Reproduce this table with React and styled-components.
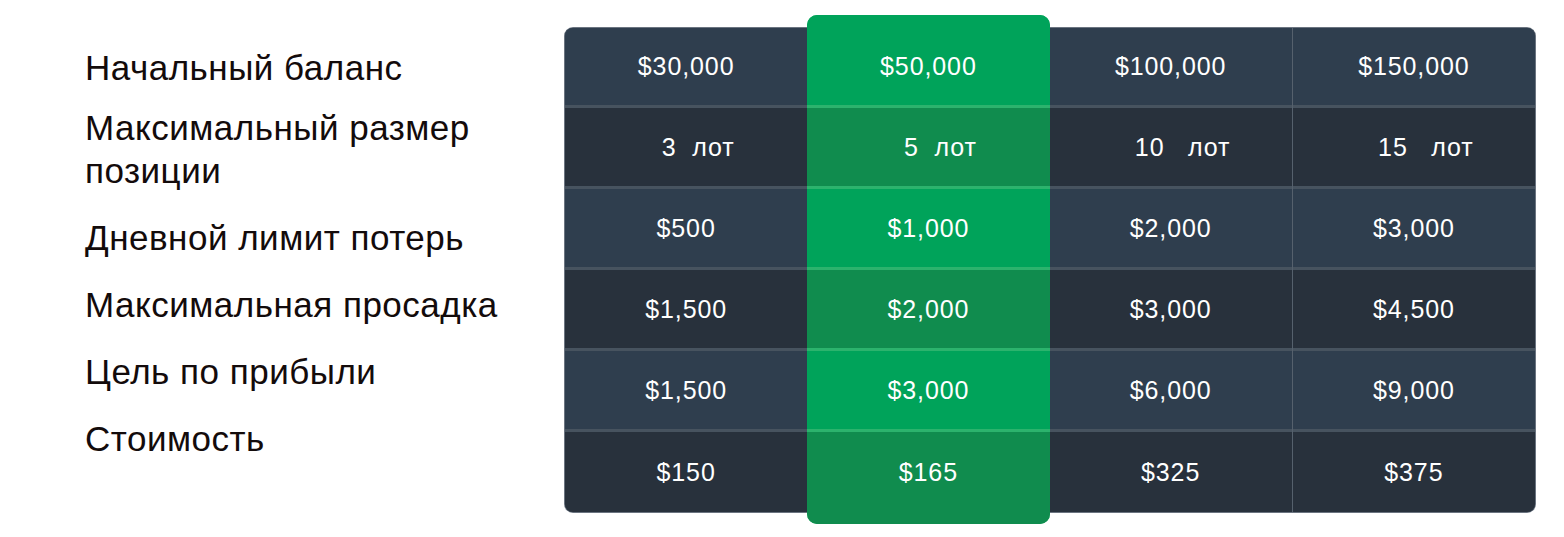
import React from "react";
import styled, { createGlobalStyle } from "styled-components";

const GlobalStyle = createGlobalStyle`
    body {
        margin: 0;
        background: #ffffff;
        font-family: "Liberation Sans", Arial, sans-serif;
    }
`

const StyledPage = styled.div`
    display: flex;
    align-items: flex-start;
    width: 1564px;
    height: 537px;
    box-sizing: border-box;
    padding: 28px 0 0 0;
`

const StyledLabels = styled.div`
    display: flex;
    flex-direction: column;
    gap: 24px;
    width: 480px;
    box-sizing: border-box;
    padding: 18px 0 0 85px;
`

const StyledLabel = styled.div`
    font-size: 35px;
    line-height: 43px;
    letter-spacing: 0.5px;
    color: #130b0b;
    width: 450px;
    margin-bottom: ${props => props.$tight ? '-7px' : '0'};
`

const StyledTable = styled.div`
    display: flex;
    width: 970px;
    margin-left: 85px;
    border-radius: 8px;
    background-color: #2f3e4e;
    box-shadow: 0 0 0 1px #6b7480;
`

const StyledColumn = styled.div`
    flex: 1;
    display: flex;
    flex-direction: column;
    gap: 3px;
    position: relative;
    background-color: ${props => props.$featured ? '#2cb36d' : '#47535f'};
    border-left: ${props => props.$divided ? '1px solid #56616d' : 'none'};
    border-radius: ${props => props.$featured ? '10px' : '0'};
    margin: ${props => props.$featured ? '-13px 0 -12px' : '0'};
    overflow: hidden;
    z-index: ${props => props.$featured ? 2 : 1};

    &:first-child {
        border-radius: 8px 0 0 8px;
    }
    &:last-child {
        border-radius: 0 8px 8px 0;
    }
`

const rowColor = (featured, even) => {
    if (featured) return even ? '#108c4e' : '#00a35a';
    return even ? '#28313c' : '#2f3e4e';
}

const StyledCell = styled.div`
    height: 78px;
    display: flex;
    align-items: center;
    justify-content: center;
    box-sizing: border-box;
    padding-left: ${props => props.$shift ? '24px' : '0'};
    background-color: ${props => rowColor(props.$featured, props.$even)};
    color: #ffffff;
    font-size: 25px;
    letter-spacing: 0.9px;
    white-space: pre;

    &:first-child {
        height: ${props => props.$featured ? '90px' : '77px'};
        padding-top: ${props => props.$featured ? '12px' : '0'};
    }
    &:last-child {
        height: ${props => props.$featured ? '92px' : '80px'};
        padding-bottom: ${props => props.$featured ? '12px' : '0'};
    }
`

const labels = [
    "Начальный баланс",
    "Максимальный размер позиции",
    "Дневной лимит потерь",
    "Максимальная просадка",
    "Цель по прибыли",
    "Стоимость",
]

const plans = [
    { featured: false, values: ["$30,000", "3  лот", "$500", "$1,500", "$1,500", "$150"] },
    { featured: true, values: ["$50,000", "5  лот", "$1,000", "$2,000", "$3,000", "$165"] },
    { featured: false, values: ["$100,000", "10   лот", "$2,000", "$3,000", "$6,000", "$325"] },
    { featured: false, values: ["$150,000", "15   лот", "$3,000", "$4,500", "$9,000", "$375"] },
]

const App = () => {

    return (
        <>
            <GlobalStyle />
            <StyledPage>
                <StyledLabels>
                    {labels.map((label, i) => (
                        <StyledLabel key={label} $tight={i === 0}>{label}</StyledLabel>
                    ))}
                </StyledLabels>
                <StyledTable>
                    {plans.map((plan, col) => (
                        <StyledColumn
                            key={col}
                            $featured={plan.featured}
                            $divided={col > 2}
                        >
                            {plan.values.map((value, row) => (
                                <StyledCell
                                    key={row}
                                    $featured={plan.featured}
                                    $even={row % 2 === 1}
                                    $shift={row === 1}
                                >{value}</StyledCell>
                            ))}
                        </StyledColumn>
                    ))}
                </StyledTable>
            </StyledPage>
        </>
    )
}

export default App;
